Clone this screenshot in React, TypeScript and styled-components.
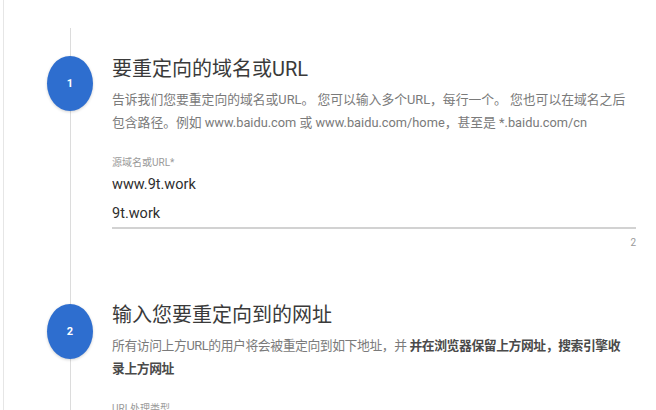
import styled, { createGlobalStyle } from 'styled-components'

const GlobalStyle = createGlobalStyle`
  html, body {
    margin: 0;
    padding: 0;
    background: #ffffff;
  }
  body {
    font-family: Roboto, 'Noto Sans CJK SC', sans-serif;
    color: #3c3c3c;
    overflow: hidden;
  }
`

const Page = styled.div`
  margin-left: 3px;
  min-height: 100vh;
  border-left: 1px solid #e6e6e6;
  padding-right: 20px;
  display: flex;
  flex-direction: column;
`

const StepList = styled.div`
  position: relative;
  flex: 1;
  padding-top: 55px;

  &::before {
    content: '';
    position: absolute;
    top: 28px;
    bottom: 0;
    left: 66px;
    width: 1px;
    background: #dcdcdc;
  }
`

const Step = styled.section<{ $gap?: number }>`
  display: grid;
  grid-template-columns: 108px 1fr;
  margin-top: ${p => p.$gap ?? 0}px;
`

const Rail = styled.div`
  position: relative;
  z-index: 1;
`

const Badge = styled.div<{ $offset: number }>`
  width: 46px;
  height: 55px;
  margin-left: 43px;
  margin-top: ${p => p.$offset}px;
  border-radius: 50%;
  background: #2e6ecf;
  box-shadow: 0 1px 3px rgba(0, 0, 0, 0.18);
  color: #ffffff;
  font-size: 11px;
  font-weight: 700;
  display: flex;
  align-items: center;
  justify-content: center;
`

const Body = styled.div`
  min-width: 0;
`

const Title = styled.h2`
  margin: 0;
  font-size: 20px;
  line-height: 28px;
  font-weight: 400;
  color: #3a3a3a;
`

const Desc = styled.p<{ $tight?: boolean }>`
  margin: 6px 0 0;
  font-size: 12.8px;
  line-height: 22.5px;
  letter-spacing: ${p => (p.$tight ? '-0.4px' : '0')};
  color: #7a7a7a;
  white-space: nowrap;
`

const Strong = styled.span`
  font-weight: 700;
  color: #4a4a4a;
`

const Label = styled.label`
  display: block;
  margin-top: 22px;
  font-size: 10px;
  line-height: 14px;
  color: #9a9a9a;
`

const Lines = styled.textarea`
  display: block;
  width: 100%;
  box-sizing: border-box;
  height: 59px;
  margin: 0;
  padding: 0;
  border: none;
  border-bottom: 2px solid #d2d2d2;
  outline: none;
  resize: none;
  overflow: hidden;
  background: transparent;
  font-family: Roboto, 'Noto Sans CJK SC', sans-serif;
  font-size: 14.5px;
  line-height: 29px;
  color: #2e2e2e;
`

const Counter = styled.div`
  margin-top: 7px;
  text-align: right;
  font-size: 10px;
  line-height: 14px;
  color: #9a9a9a;
`

export default function App() {
  return (
    <>
      <GlobalStyle />
      <Page>
        <StepList>
          <Step>
            <Rail>
              <Badge $offset={1}>1</Badge>
            </Rail>
            <Body>
              <Title>要重定向的域名或URL</Title>
              <Desc>
                告诉我们您要重定向的域名或URL。 您可以输入多个URL，每行一个。 您也可以在域名之后
                <br />
                包含路径。例如 www.baidu.com 或 www.baidu.com/home，甚至是 *.baidu.com/cn
              </Desc>
              <Label>源域名或URL*</Label>
              <Lines readOnly rows={2} value={'www.9t.work\n9t.work'} />
              <Counter>2</Counter>
            </Body>
          </Step>

          <Step $gap={51}>
            <Rail>
              <Badge $offset={3}>2</Badge>
            </Rail>
            <Body>
              <Title>输入您要重定向到的网址</Title>
              <Desc $tight>
                所有访问上方URL的用户将会被重定向到如下地址，并 <Strong>并在浏览器保留上方网址，搜索引擎收</Strong>
                <br />
                <Strong>录上方网址</Strong>
              </Desc>
              <Label>URL处理类型</Label>
            </Body>
          </Step>
        </StepList>
      </Page>
    </>
  )
}
